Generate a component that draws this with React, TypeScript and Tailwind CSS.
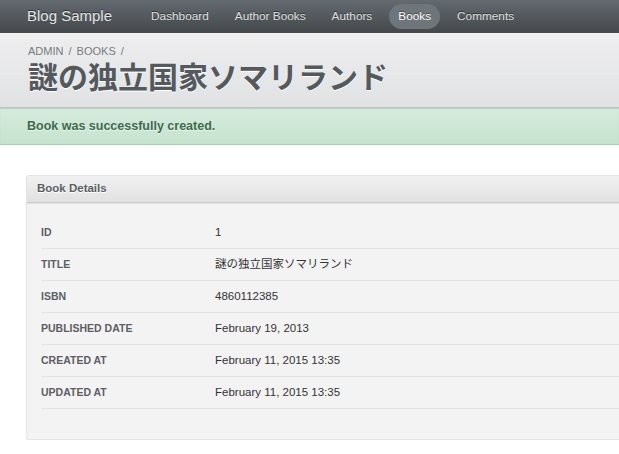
import React from 'react';

const navItems = ['Dashboard', 'Author Books', 'Authors', 'Books', 'Comments'];

const rows: [string, string][] = [
  ['ID', '1'],
  ['TITLE', '謎の独立国家ソマリランド'],
  ['ISBN', '4860112385'],
  ['PUBLISHED DATE', 'February 19, 2013'],
  ['CREATED AT', 'February 11, 2015 13:35'],
  ['UPDATED AT', 'February 11, 2015 13:35'],
];

export default function App() {
  return (
    <div className="min-h-screen w-[619px] overflow-hidden bg-white font-['Liberation_Sans','Noto_Sans_CJK_JP',sans-serif]">
      {/* top bar */}
      <div className="flex h-[33px] items-center bg-gradient-to-b from-[#636a70] to-[#44484c] pl-[27px]">
        <span className="mr-[30px] text-[15px] text-[#e6e6e6] [text-shadow:0_-1px_0_rgba(0,0,0,0.5)]">Blog Sample</span>
        <div className="flex items-center gap-[8px]">
          {navItems.map((item) =>
            item === 'Books' ? (
              <span
                key={item}
                className="rounded-full bg-[#6e757b] px-[9px] py-[4px] text-[11.8px] text-white [text-shadow:0_-1px_0_rgba(0,0,0,0.4)]"
              >
                {item}
              </span>
            ) : (
              <span
                key={item}
                className="px-[9px] py-[4px] text-[11.8px] text-[#e0e0e0] [text-shadow:0_-1px_0_rgba(0,0,0,0.5)]"
              >
                {item}
              </span>
            )
          )}
        </div>
      </div>

      {/* page header */}
      <div className="h-[75px] border-b border-[#bfc0c2] bg-gradient-to-b from-[#eeeeef] to-[#e1e2e4] pl-[28px] pt-[11px]">
        <div className="text-[11px] leading-[14px] text-[#777b80]">
          ADMIN <span className="mx-[2px]">/</span> BOOKS <span className="mx-[2px]">/</span>
        </div>
        <h1 className="mt-[1px] text-[30px] font-bold leading-[38px] text-[#54595e] [text-shadow:0_1px_0_#fff]">
          謎の独立国家ソマリランド
        </h1>
      </div>

      {/* flash */}
      <div className="flex h-[37px] items-center border-b border-[#a6d3b3] bg-gradient-to-b from-[#d6ebdd] to-[#c6e3cf] pl-[27px] shadow-[inset_0_1px_1px_rgba(0,0,0,0.12)]">
        <span className="text-[12.5px] font-bold text-[#3c6a4d] [text-shadow:0_1px_0_rgba(255,255,255,0.6)]">
          Book was successfully created.
        </span>
      </div>

      {/* panel */}
      <div className="ml-[26px] mt-[30px] w-[620px] rounded-l-[3px] border border-r-0 border-[#e4e4e4] bg-[#f3f3f3] pb-[30px]">
        <div className="flex h-[27px] items-center border-b border-[#cbcbcb] bg-gradient-to-b from-[#f1f1f1] to-[#e1e1e2] pl-[10px] shadow-[0_1px_1px_rgba(0,0,0,0.06)]">
          <span className="text-[11.5px] font-bold text-[#5a5e63] [text-shadow:0_1px_0_#fff]">Book Details</span>
        </div>
        <div className="ml-[14px] mt-[14px]">
          {rows.map(([label, value]) => (
            <div key={label} className="flex h-[32px] items-center border-b border-[#e2e2e2]">
              <span className="w-[174px] text-[10.5px] font-bold text-[#5c5f63]">{label}</span>
              <span className="text-[11.5px] text-[#333]">{value}</span>
            </div>
          ))}
        </div>
      </div>
    </div>
  );
}
